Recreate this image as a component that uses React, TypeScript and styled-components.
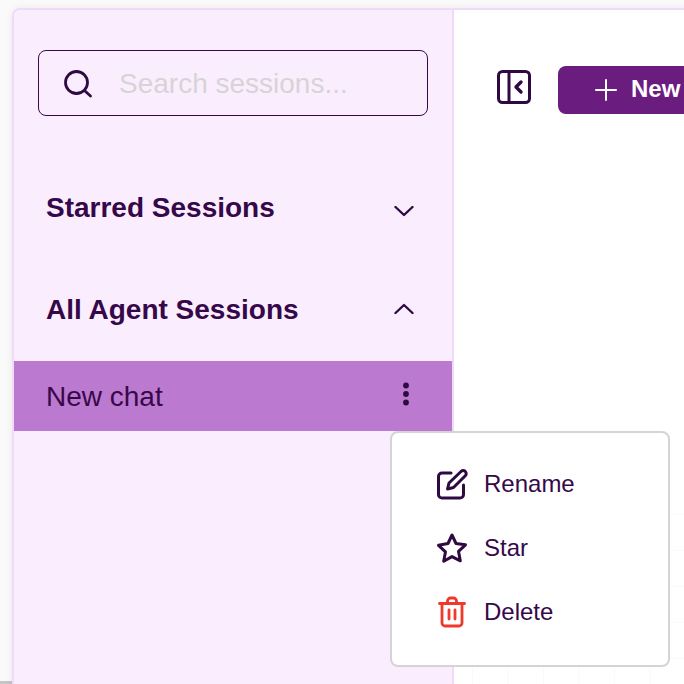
import React from "react";
import styled, { createGlobalStyle } from "styled-components";

const Global = createGlobalStyle`
  html, body { margin: 0; padding: 0; height: 684px; overflow: hidden; background: #fafafa; }
  body { font-family: "Liberation Sans", Arial, sans-serif; color: #36084a; }
`;

const Page = styled.div`
  width: 684px;
  height: 684px;
  box-sizing: border-box;
  padding: 8px 0 0 12px;
  overflow: hidden;
  position: relative;
  background: linear-gradient(#c6c6c6, #c6c6c6) left bottom / 100% 3px no-repeat, #fafafa;
`;

const Frame = styled.div`
  width: 700px;
  height: 690px;
  box-sizing: border-box;
  display: flex;
  border-top: 2px solid #f0d9f9;
  border-left: 2px solid #f0d9f9;
  border-top-left-radius: 8px;
  background: #fff;
  box-shadow: 0 0 8px rgba(0, 0, 0, 0.07);
  overflow: hidden;
`;

const Sidebar = styled.aside`
  width: 440px;
  flex: none;
  box-sizing: border-box;
  background: #faeefe;
  border-right: 2px solid #f0d9f9;
  padding-top: 40px;
  display: flex;
  flex-direction: column;
`;

const SearchBox = styled.div`
  margin: 0 24px;
  height: 66px;
  box-sizing: border-box;
  border: 1px solid #36084a;
  border-radius: 8px;
  display: flex;
  align-items: center;
  padding: 2px 0 0 24px;
  gap: 26px;
`;

const Placeholder = styled.span`
  font-size: 28px;
  color: #d6d4d6;
`;

const SectionHeader = styled.div<{ $top: number }>`
  margin-top: ${(p) => p.$top}px;
  padding: 0 38px 0 32px;
  height: 36px;
  display: flex;
  align-items: center;
  justify-content: space-between;
`;

const SectionTitle = styled.h2`
  margin: 0;
  font-size: 28px;
  font-weight: 700;
  color: #36084a;
`;

const Chevron = styled.svg<{ $lift: number }>`
  margin-bottom: ${(p) => Math.max(p.$lift, 0)}px;
  margin-top: ${(p) => Math.max(-p.$lift, 0)}px;
`;

const ChatRow = styled.div`
  margin-top: 33px;
  height: 70px;
  box-sizing: border-box;
  padding: 2px 42px 0 32px;
  background: #bb79cf;
  display: flex;
  align-items: center;
  justify-content: space-between;
`;

const ChatName = styled.span`
  font-size: 28px;
  color: #36084a;
`;

const Dots = styled.svg`
  margin-bottom: 7px;
`;

const Main = styled.main`
  flex: 1;
  position: relative;
`;

const Grid = styled.div`
  position: absolute;
  inset: 0;
  background-image:
    linear-gradient(to right, #fafafa 1px, transparent 1px),
    linear-gradient(to bottom, #fafafa 1px, transparent 1px);
  background-size: 35.5px 36px;
  background-position: 18px 0;
  mask-image: linear-gradient(to bottom, transparent 440px, #000 520px);
`;

const Toolbar = styled.div`
  position: relative;
  display: flex;
  align-items: flex-start;
  gap: 27px;
  padding: 56px 0 0 43px;
`;

const ToggleIcon = styled.svg`
  margin-top: 4px;
  flex: none;
`;

const NewButton = styled.div`
  width: 200px;
  height: 48px;
  box-sizing: border-box;
  border-radius: 8px;
  background: #6b1d7f;
  color: #fff;
  display: flex;
  align-items: center;
  gap: 14px;
  padding-left: 37px;
  font-size: 24px;
  font-weight: 700;
`;

const ButtonLabel = styled.span`
  margin-bottom: 2px;
`;

const Menu = styled.div`
  position: absolute;
  left: 390px;
  top: 431px;
  width: 280px;
  height: 236px;
  box-sizing: border-box;
  background: #fff;
  border: 2px solid #d4d4d4;
  border-radius: 8px;
  padding: 27px 0 0 44px;
  display: flex;
  flex-direction: column;
  gap: 16px;
`;

const MenuItem = styled.div`
  height: 48px;
  display: flex;
  align-items: center;
  gap: 16px;
  font-size: 24px;
  color: #36084a;
`;

const Dark = "#2f0a42";

export default function App() {
  return (
    <>
      <Global />
      <Page>
        <Frame>
          <Sidebar>
            <SearchBox>
              <svg width="30" height="30" viewBox="0 0 30 30" fill="none" stroke={Dark} strokeWidth="2.8" strokeLinecap="round">
                <circle cx="13.5" cy="13.5" r="11" />
                <path d="M22 22l5.5 5" />
              </svg>
              <Placeholder>Search sessions...</Placeholder>
            </SearchBox>
            <SectionHeader $top={74}>
              <SectionTitle>Starred Sessions</SectionTitle>
              <Chevron $lift={-6} width="20" height="12" viewBox="0 0 20 12" fill="none" stroke={Dark} strokeWidth="2.4" strokeLinecap="round" strokeLinejoin="round">
                <path d="M1.500 2l8.500 8 8.500-8" />
              </Chevron>
            </SectionHeader>
            <SectionHeader $top={66}>
              <SectionTitle>All Agent Sessions</SectionTitle>
              <Chevron $lift={3} width="20" height="12" viewBox="0 0 20 12" fill="none" stroke={Dark} strokeWidth="2.4" strokeLinecap="round" strokeLinejoin="round">
                <path d="M1.500 10l8.500-8 8.500 8" />
              </Chevron>
            </SectionHeader>
            <ChatRow>
              <ChatName>New chat</ChatName>
              <Dots width="8" height="24" viewBox="0 0 8 24" fill={Dark}>
                <circle cx="4" cy="3.500" r="2.900" />
                <circle cx="4" cy="12" r="2.900" />
                <circle cx="4" cy="20.500" r="2.900" />
              </Dots>
            </ChatRow>
          </Sidebar>
          <Main>
            <Grid />
            <Toolbar>
              <ToggleIcon width="34" height="34" viewBox="0 0 34 34" fill="none" stroke={Dark} strokeWidth="3" strokeLinecap="round" strokeLinejoin="round">
                <rect x="1.500" y="1.500" width="31" height="31" rx="4" />
                <path d="M12 1.500v31" />
                <path d="M24 12l-5 5 5 5" strokeWidth="3.4" />
              </ToggleIcon>
              <NewButton>
                <svg width="22" height="22" viewBox="0 0 22 22" stroke="#fff" strokeWidth="2" strokeLinecap="round">
                  <path d="M11 1v20M1 11h20" />
                </svg>
                <ButtonLabel>New</ButtonLabel>
              </NewButton>
            </Toolbar>
          </Main>
        </Frame>
        <Menu>
          <MenuItem>
            <svg width="32" height="32" viewBox="0 0 32 32" fill="none" stroke={Dark} strokeWidth="3" strokeLinecap="round" strokeLinejoin="round">
              <path d="M15 5H6a3.500 3.500 0 0 0-3.500 3.500v18A3.500 3.500 0 0 0 6 30h18a3.500 3.500 0 0 0 3.500-3.500V17" />
              <path d="M25 3.500a3 3 0 0 1 4.300 4.300L17.500 19.500l-6 1.500 1.500-6z" />
            </svg>
            Rename
          </MenuItem>
          <MenuItem>
            <svg width="32" height="32" viewBox="0 0 32 32" fill="none" stroke={Dark} strokeWidth="3" strokeLinecap="round" strokeLinejoin="round">
              <path d="M16 3l4 8.500 9.500 1.300-7 6.500 1.800 9.500L16 24.600 7.700 29.300l1.800-9.500-7-6.500L12 11.500z" />
            </svg>
            Star
          </MenuItem>
          <MenuItem>
            <svg width="32" height="32" viewBox="0 0 32 32" fill="none" stroke="#f0392b" strokeWidth="2.8" strokeLinecap="round" strokeLinejoin="round">
              <path d="M3.500 7.500h25" />
              <path d="M11.500 7.500V5a3 3 0 0 1 3-3h3a3 3 0 0 1 3 3v2.500" />
              <path d="M6 7.500V27a3 3 0 0 0 3 3h14a3 3 0 0 0 3-3V7.500" />
              <path d="M13 14v9M19 14v9" />
            </svg>
            Delete
          </MenuItem>
        </Menu>
      </Page>
    </>
  );
}
